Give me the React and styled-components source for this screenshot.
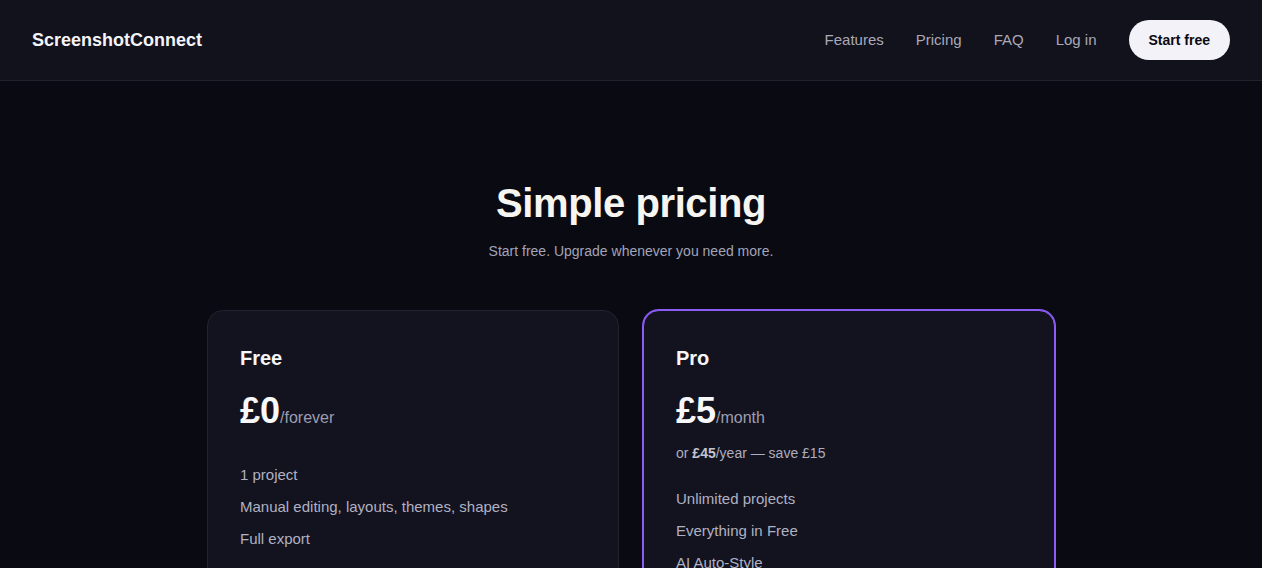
import React from 'react';
import styled, { createGlobalStyle } from 'styled-components';

const GlobalStyle = createGlobalStyle`
  * {
    box-sizing: border-box;
  }

  html, body {
    margin: 0;
    padding: 0;
    background-color: #0a0a12;
    font-family: "Liberation Sans", Arial, sans-serif;
    color: #f4f4f6;
  }
`;

const Header = styled.header`
  height: 81px;
  display: flex;
  align-items: center;
  justify-content: space-between;
  padding: 0 32px 1px;
  background-color: #12121c;
  border-bottom: 1px solid #22222e;
`;

const Logo = styled.a`
  padding-top: 2px;
  font-size: 18px;
  font-weight: 700;
  color: #f4f4f8;
  text-decoration: none;
`;

const Nav = styled.nav`
  display: flex;
  align-items: center;
  gap: 32px;
`;

const NavLink = styled.a`
  font-size: 15px;
  color: #a9a9b8;
  text-decoration: none;
  cursor: pointer;
`;

const StartButton = styled.button`
  height: 40px;
  padding: 0 20px;
  border: none;
  border-radius: 20px;
  background-color: #f3f2f8;
  color: #0a0a12;
  font-family: inherit;
  font-size: 14px;
  font-weight: 700;
  cursor: pointer;
`;

const Main = styled.main`
  display: flex;
  flex-direction: column;
  align-items: center;
  padding: 98px 20px 80px;
`;

const Heading = styled.h1`
  margin: 0;
  font-size: 40px;
  line-height: 48px;
  font-weight: 700;
  letter-spacing: -0.01em;
  color: #f7f5ef;
  text-align: center;
`;

const Subheading = styled.p`
  margin: 14px 0 0;
  font-size: 14px;
  line-height: 20px;
  color: #a2a4b8;
  text-align: center;
`;

const Plans = styled.div`
  display: grid;
  grid-template-columns: repeat(2, 412px);
  gap: 24px;
  margin-top: 49px;
`;

const PlanCard = styled.div`
  display: flex;
  flex-direction: column;
  padding: 32px;
  background-color: #13131f;
  border: 1px solid ${(p) => (p.$featured ? '#8b5cf6' : '#23232f')};
  box-shadow: ${(p) => (p.$featured ? '0 0 0 1px #8b5cf6' : 'none')};
  border-radius: 16px;
`;

const PlanName = styled.h3`
  margin: 0;
  font-size: 20px;
  line-height: 30px;
  font-weight: 700;
  color: #f6f6f8;
`;

const PriceRow = styled.div`
  display: flex;
  align-items: baseline;
  margin-top: 20px;
  margin-bottom: 12px;
`;

const Amount = styled.span`
  font-size: 36px;
  line-height: 36px;
  font-weight: 700;
  color: #f8f8fa;
`;

const Period = styled.span`
  font-size: 16px;
  color: #9d9db0;
`;

const YearNote = styled.p`
  margin: 2px 0 2px;
  font-size: 14px;
  line-height: 20px;
  color: #adadbf;

  strong {
    font-weight: 700;
    color: #c4c4d2;
  }
`;

const FeatureList = styled.ul`
  list-style: none;
  margin: 24px 0 0;
  padding: 0;
  display: flex;
  flex-direction: column;
  gap: 12px;
`;

const Feature = styled.li`
  font-size: 15px;
  line-height: 20px;
  color: #b0b1c2;
`;

const PlanButton = styled.button`
  margin-top: 32px;
  height: 44px;
  border-radius: 22px;
  border: 1px solid ${(p) => (p.$featured ? '#8b5cf6' : '#2e2e3c')};
  background-color: ${(p) => (p.$featured ? '#8b5cf6' : 'transparent')};
  color: #f4f4f8;
  font-family: inherit;
  font-size: 15px;
  font-weight: 700;
  cursor: pointer;
`;

const plans = [
  {
    name: 'Free',
    amount: '£0',
    period: '/forever',
    features: ['1 project', 'Manual editing, layouts, themes, shapes', 'Full export'],
    cta: 'Get started',
  },
  {
    name: 'Pro',
    amount: '£5',
    period: '/month',
    featured: true,
    note: true,
    features: ['Unlimited projects', 'Everything in Free', 'AI Auto-Style', 'Priority support'],
    cta: 'Upgrade to Pro',
  },
];

const App = () => {
  return (
    <>
      <GlobalStyle />
      <Header>
        <Logo>ScreenshotConnect</Logo>
        <Nav>
          <NavLink>Features</NavLink>
          <NavLink>Pricing</NavLink>
          <NavLink>FAQ</NavLink>
          <NavLink>Log in</NavLink>
          <StartButton>Start free</StartButton>
        </Nav>
      </Header>
      <Main>
        <Heading>Simple pricing</Heading>
        <Subheading>Start free. Upgrade whenever you need more.</Subheading>
        <Plans>
          {plans.map((plan) => (
            <PlanCard key={plan.name} $featured={plan.featured}>
              <PlanName>{plan.name}</PlanName>
              <PriceRow>
                <Amount>{plan.amount}</Amount>
                <Period>{plan.period}</Period>
              </PriceRow>
              {plan.note && (
                <YearNote>
                  or <strong>£45</strong>/year — save £15
                </YearNote>
              )}
              <FeatureList>
                {plan.features.map((f) => (
                  <Feature key={f}>{f}</Feature>
                ))}
              </FeatureList>
              <PlanButton $featured={plan.featured}>{plan.cta}</PlanButton>
            </PlanCard>
          ))}
        </Plans>
      </Main>
    </>
  );
};

export default App;
